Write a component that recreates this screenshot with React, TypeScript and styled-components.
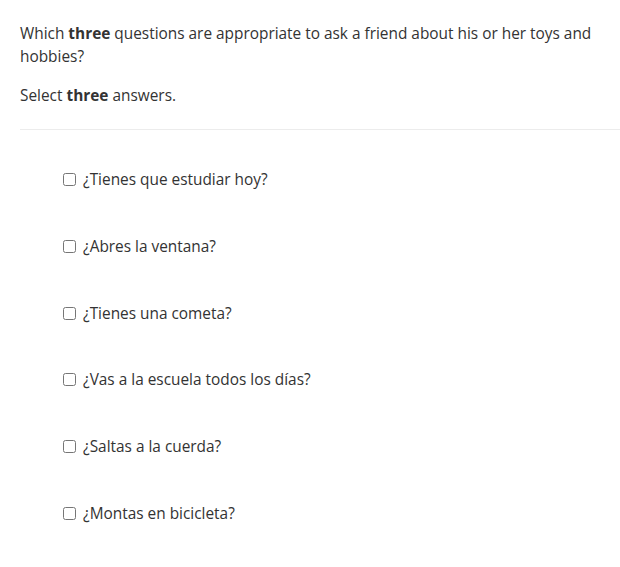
import React from "react";
import styled, { createGlobalStyle } from "styled-components";

const GlobalStyle = createGlobalStyle`
  html, body {
    margin: 0;
    padding: 0;
    background: #fff;
  }
  body {
    font-family: "Open Sans", "Liberation Sans", sans-serif;
    color: #333;
  }
`;

const options = [
  "¿Tienes que estudiar hoy?",
  "¿Abres la ventana?",
  "¿Tienes una cometa?",
  "¿Vas a la escuela todos los días?",
  "¿Saltas a la cuerda?",
  "¿Montas en bicicleta?"
];

function App() {
  return (
    <>
      <GlobalStyle />
      <QuestionWrapper>
        <Prompt>
          Which <b>three</b> questions are appropriate to ask a friend about his or her toys and
          hobbies?
        </Prompt>
        <Hint>
          Select <b>three</b> answers.
        </Hint>
        <Divider />
        <AnswerList>
          {options.map((option, id) => (
            <AnswerRow key={id}>
              <Check type="checkbox" />
              <span>{option}</span>
            </AnswerRow>
          ))}
        </AnswerList>
      </QuestionWrapper>
    </>
  );
}

export default App;

const QuestionWrapper = styled.div`
  padding: 22px 0 0 20px;
  width: 600px;
`;

const Prompt = styled.p`
  margin: 0;
  font-size: 15.4px;
  line-height: 23px;
  b {
    font-weight: 700;
  }
`;

const Hint = styled(Prompt)`
  margin-top: 16px;
`;

const Divider = styled.hr`
  border: 0;
  border-top: 1px solid #ececec;
  margin: 22px 0 0;
`;

const AnswerList = styled.div`
  display: flex;
  flex-direction: column;
  padding: 38px 0 0 43px;
  gap: 43.8px;
`;

const AnswerRow = styled.label`
  display: flex;
  align-items: center;
  gap: 7px;
  font-size: 15.4px;
  line-height: 23px;
`;

const Check = styled.input`
  width: 13px;
  height: 13px;
  margin: 0;
  flex-shrink: 0;
`;
